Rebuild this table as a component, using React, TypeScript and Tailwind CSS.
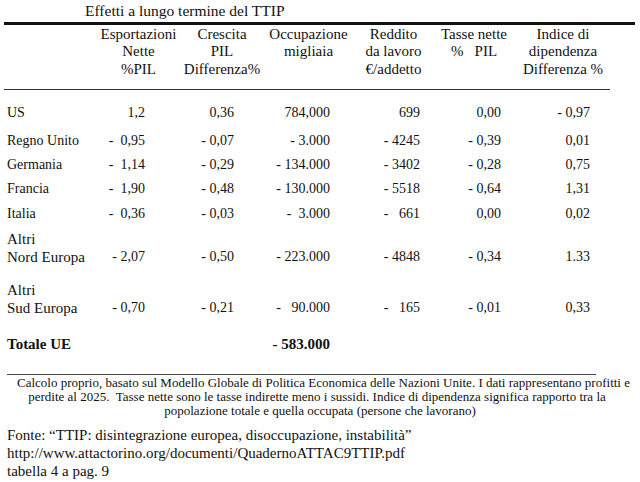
const rows: { label: string[]; values: string[]; tall?: boolean; h: string }[] = [
  { label: ["US"], values: ["1,2", "0,36", "784,000", "699", "0,00", "- 0,97"], h: "h-[27.5px]" },
  { label: ["Regno Unito"], values: ["-  0,95", "- 0,07", "- 3.000", "- 4245", "- 0,39", "0,01"], h: "h-[24.5px]" },
  { label: ["Germania"], values: ["-  1,14", "- 0,29", "- 134.000", "- 3402", "- 0,28", "0,75"], h: "h-[24px]" },
  { label: ["Francia"], values: ["-  1,90", "- 0,48", "- 130.000", "- 5518", "- 0,64", "1,31"], h: "h-[24.5px]" },
  { label: ["Italia"], values: ["-  0,36", "- 0,03", "-  3.000", "-   661", "0,00", "0,02"], h: "h-[28.25px]" },
  { label: ["Altri", "Nord Europa"], values: ["- 2,07", "- 0,50", "- 223.000", "- 4848", "- 0,34", "1.33"], tall: true, h: "h-[51px]" },
  { label: ["Altri", "Sud Europa"], values: ["- 0,70", "- 0,21", "-   90.000", "-   165", "- 0,01", "0,33"], tall: true, h: "h-[50.75px]" },
];

const headers = [
  ["Esportazioni", "Nette", "%PIL"],
  ["Crescita", "PIL", "Differenza%"],
  ["Occupazione", "migliaia"],
  ["Reddito", "da lavoro", "€/addetto"],
  ["Tasse nette", "%   PIL"],
  ["Indice di", "dipendenza", "Differenza %"],
];

const bodyCols = "grid grid-cols-[93px_45px_89px_96px_90px_81px_89px]";

export default function App() {
  return (
    <div className="h-[482px] w-[640px] overflow-hidden bg-white font-['Liberation_Serif',serif] text-[#111]">
      <div className="pt-[2px] pl-[85px] text-[15.5px] leading-[18px]">Effetti a lungo termine del TTIP</div>
      <div className="mt-[2px] ml-[4px] h-[2.5px] w-[631px] bg-[#111]" />

      {/* header */}
      <div className="ml-[95px] grid grid-cols-[87px_80px_93px_77px_84px_94px] pt-[1px] text-[15px] leading-[17.75px]">
        {headers.map((lines, i) => (
          <div key={i} className="text-center whitespace-pre">
            {lines.map((l) => (
              <div key={l}>{l}</div>
            ))}
          </div>
        ))}
      </div>
      <div className="mt-[9.75px] ml-[4px] h-px w-[606px] bg-[#333]" />

      {/* body */}
      <div className="mt-[11.5px] pl-[7px] text-[14px]">
        {rows.map((r) => (
          <div key={r.label.join(" ")} className={`${bodyCols} ${r.h} items-start`}>
            <div className={r.tall ? "text-[15px] leading-[18.5px]" : "leading-[24px]"}>
              {r.label.map((l) => (
                <div key={l}>{l}</div>
              ))}
            </div>
            {r.values.map((v, i) => (
              <div
                key={i}
                className={`whitespace-pre text-right ${r.tall ? "mt-[18.5px] leading-[18.5px]" : "leading-[24px]"}`}
              >
                {v}
              </div>
            ))}
          </div>
        ))}
        <div className={`${bodyCols} h-[24px] text-[15px] font-bold leading-[24px]`}>
          <div>Totale UE</div>
          <div />
          <div />
          <div className="text-right">- 583.000</div>
        </div>
      </div>

      {/* notes */}
      <div className="mt-[18.5px] ml-[7px] h-px w-[589px] bg-[#444]" />
      <div className="mt-[1px] text-center text-[13px] leading-[14px]">
        <div className="pl-[7px]">
          Calcolo proprio, basato sul Modello Globale di Politica Economica delle Nazioni Unite. I dati rappresentano profitti e
        </div>
        <div className="pr-[6px] whitespace-pre">
          perdite al 2025.  Tasse nette sono le tasse indirette meno i sussidi. Indice di dipendenza significa rapporto tra la
        </div>
        <div>popolazione totale e quella occupata (persone che lavorano)</div>
      </div>
      <div className="mt-[8px] pl-[7px] text-[15px] leading-[18px]">
        <div>Fonte: “TTIP: disintegrazione europea, disoccupazione, instabilità”</div>
        <div>http://www.attactorino.org/documenti/QuadernoATTAC9TTIP.pdf</div>
        <div>tabella 4 a pag. 9</div>
      </div>
    </div>
  );
}
